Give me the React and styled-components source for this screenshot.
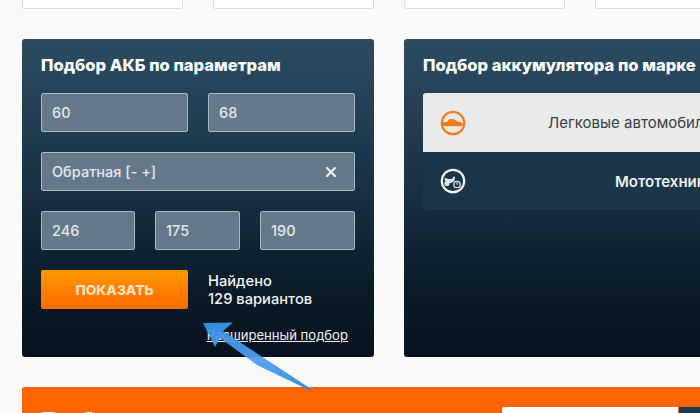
import React from 'react';
import styled, { createGlobalStyle } from 'styled-components';
import { X } from 'lucide-react';

const GlobalStyle = createGlobalStyle`
  html, body {
    margin: 0;
    height: 413px;
    overflow: hidden;
    background: #f9faf8;
  }
  * { box-sizing: border-box; }
`;

const Page = styled.div`
  position: relative;
  width: 700px;
  height: 413px;
  overflow: hidden;
  padding-left: 22px;
  font-family: Inter, "Noto Sans", sans-serif;
`;

const TopRow = styled.div`
  display: flex;
  gap: 30px;
  height: 9px;
  margin-bottom: 30px;
`;

const TopCard = styled.div`
  flex: 0 0 161px;
  height: 9px;
  background: #fff;
  border: 1px solid #dcdcdc;
  border-top: 0;
  border-radius: 0 0 3px 3px;
`;

const Panels = styled.div`
  display: flex;
  gap: 30px;
  margin-bottom: 30px;
`;

const Panel = styled.section`
  flex: 0 0 ${({ $wide }) => ($wide ? '600px' : '352px')};
  height: 318px;
  border-radius: 3px;
  padding: 16px 19px 0;
  background: linear-gradient(180deg, #2d4c62 0%, #1e3a4f 32%, #14293a 58%, #0a1925 82%, #07131e 100%);
`;

const Title = styled.h2`
  margin: 0 0 17px;
  font-size: 16.6px;
  line-height: 21px;
  font-weight: 800;
  color: #fff;
  white-space: nowrap;
`;

const FieldRow = styled.div`
  display: flex;
  gap: 20px;
  margin-bottom: 20px;
`;

const Field = styled.div`
  display: flex;
  align-items: center;
  justify-content: space-between;
  flex: 0 0 ${({ $w }) => $w}px;
  height: 39px;
  padding: 0 15px 0 10px;
  background: #66798b;
  border: 1px solid #a9b9c6;
  border-radius: 2px;
  color: #e2e7eb;
  font-size: 14.5px;
  font-weight: 500;
`;

const ClearIcon = styled(X)`
  width: 16px;
  height: 16px;
  color: #f2f4f6;
`;

const ResultRow = styled.div`
  display: flex;
  gap: 20px;
  align-items: center;
`;

const ShowButton = styled.button`
  width: 147px;
  height: 39px;
  border: 0;
  border-radius: 2px;
  background: linear-gradient(180deg, #ff9800 0%, #ff6a00 100%);
  color: #ffe0c0;
  font-family: inherit;
  font-size: 13.7px;
  font-weight: 800;
`;

const Found = styled.div`
  color: #f0f3f5;
  font-size: 14.7px;
  line-height: 18px;
  font-weight: 500;
`;

const MoreRow = styled.div`
  display: flex;
  justify-content: flex-end;
  margin-top: 17px;
  padding-right: 7px;
`;

const MoreLink = styled.a`
  color: #eef1f3;
  font-size: 13.1px;
  line-height: 18px;
  text-decoration: underline;
`;

const TypeRow = styled.div`
  display: flex;
  align-items: center;
  height: ${({ $active }) => ($active ? '59px' : '58px')};
  padding-left: 17px;
  border-radius: ${({ $active }) => ($active ? '3px 3px 0 0' : '0 0 3px 3px')};
  background: ${({ $active }) => ($active ? '#e8ebea' : '#1c3649')};
  color: ${({ $active }) => ($active ? '#3a3f44' : '#eef1f3')};
  font-size: 15px;
  font-weight: ${({ $active }) => ($active ? 400 : 600)};
`;

const TypeLabel = styled.span`
  margin-left: ${({ $offset }) => $offset}px;
  white-space: nowrap;
`;

const Banner = styled.div`
  display: flex;
  justify-content: space-between;
  align-items: flex-start;
  width: 900px;
  height: 60px;
  padding: 20px 0 0 19px;
  background: #ff6400;
  border-radius: 2px 0 0 0;
`;

const BannerTitle = styled.div`
  color: #fff;
  font-size: 20px;
  line-height: 26px;
  font-weight: 700;
`;

const SearchBox = styled.div`
  display: flex;
  width: 420px;
`;

const SearchInput = styled.div`
  width: 176px;
  height: 40px;
  background: #fbfbf8;
  border-radius: 2px 0 0 0;
`;

const SearchButton = styled.div`
  width: 60px;
  height: 40px;
  margin-left: 1px;
  background: #1f3a50;
`;

const ArrowOverlay = styled.svg`
  position: absolute;
  left: 190px;
  top: 310px;
  width: 140px;
  height: 90px;
  pointer-events: none;
`;

const CarIcon = () => (
  <svg width="26" height="26" viewBox="0 0 26 26">
    <circle cx="13" cy="13" r="11.2" fill="none" stroke="#f47a1c" strokeWidth="2.2" />
    <path
      d="M3 12.5 L7 11.8 L9.5 9 L14 9.2 L17.5 11.6 L21.5 12.3 L23 14 L22 16.2 H5 L3 15 Z"
      fill="#f47a1c"
    />
  </svg>
);

const MotoIcon = () => (
  <svg width="26" height="26" viewBox="0 0 26 26">
    <circle cx="13" cy="13" r="11.2" fill="none" stroke="#f4f6f7" strokeWidth="2.2" />
    <path d="M4.5 9.5 L8 11 H12 L13.5 8.5 L15 9 L14.5 13 L11 15 H7 L5 13 Z" fill="#dfe4e8" />
    <circle cx="7" cy="15.5" r="2.6" fill="#dfe4e8" />
    <circle cx="17" cy="16.5" r="3.2" fill="none" stroke="#dfe4e8" strokeWidth="1.3" />
    <path d="M17 14.5 V16.8" stroke="#dfe4e8" strokeWidth="1.2" />
  </svg>
);

const App = () => (
  <Page>
    <GlobalStyle />
    <TopRow>
      <TopCard />
      <TopCard />
      <TopCard />
      <TopCard />
    </TopRow>
    <Panels>
      <Panel>
        <Title>Подбор АКБ по параметрам</Title>
        <FieldRow>
          <Field $w={147}>60</Field>
          <Field $w={147}>68</Field>
        </FieldRow>
        <FieldRow>
          <Field $w={314}>
            Обратная [- +]
            <ClearIcon strokeWidth={3} />
          </Field>
        </FieldRow>
        <FieldRow>
          <Field $w={94}>246</Field>
          <Field $w={85}>175</Field>
          <Field $w={95}>190</Field>
        </FieldRow>
        <ResultRow>
          <ShowButton>ПОКАЗАТЬ</ShowButton>
          <Found>
            Найдено
            <br />
            129 вариантов
          </Found>
        </ResultRow>
        <MoreRow>
          <MoreLink>Расширенный подбор</MoreLink>
        </MoreRow>
      </Panel>
      <Panel $wide>
        <Title>Подбор аккумулятора по марке</Title>
        <TypeRow $active>
          <CarIcon />
          <TypeLabel $offset={82}>Легковые автомобили</TypeLabel>
        </TypeRow>
        <TypeRow>
          <MotoIcon />
          <TypeLabel $offset={149}>Мототехника</TypeLabel>
        </TypeRow>
      </Panel>
    </Panels>
    <Banner>
      <BannerTitle>Подбор</BannerTitle>
      <SearchBox>
        <SearchInput />
        <SearchButton />
      </SearchBox>
    </Banner>
    <ArrowOverlay viewBox="0 0 140 90">
      <defs>
        <linearGradient id="arrowFill" x1="0" y1="0" x2="1" y2="1">
          <stop offset="0" stopColor="#3a92ea" />
          <stop offset="0.5" stopColor="#4f9ff2" />
          <stop offset="1" stopColor="#2f84dc" />
        </linearGradient>
      </defs>
      <path
        d="M13 13 L43 12.5 L33 21 L122 79.5 L120 80.5 L67 55 L30 28 L25 37 Z"
        fill="url(#arrowFill)"
        opacity="0.93"
      />
    </ArrowOverlay>
  </Page>
);

export default App;
